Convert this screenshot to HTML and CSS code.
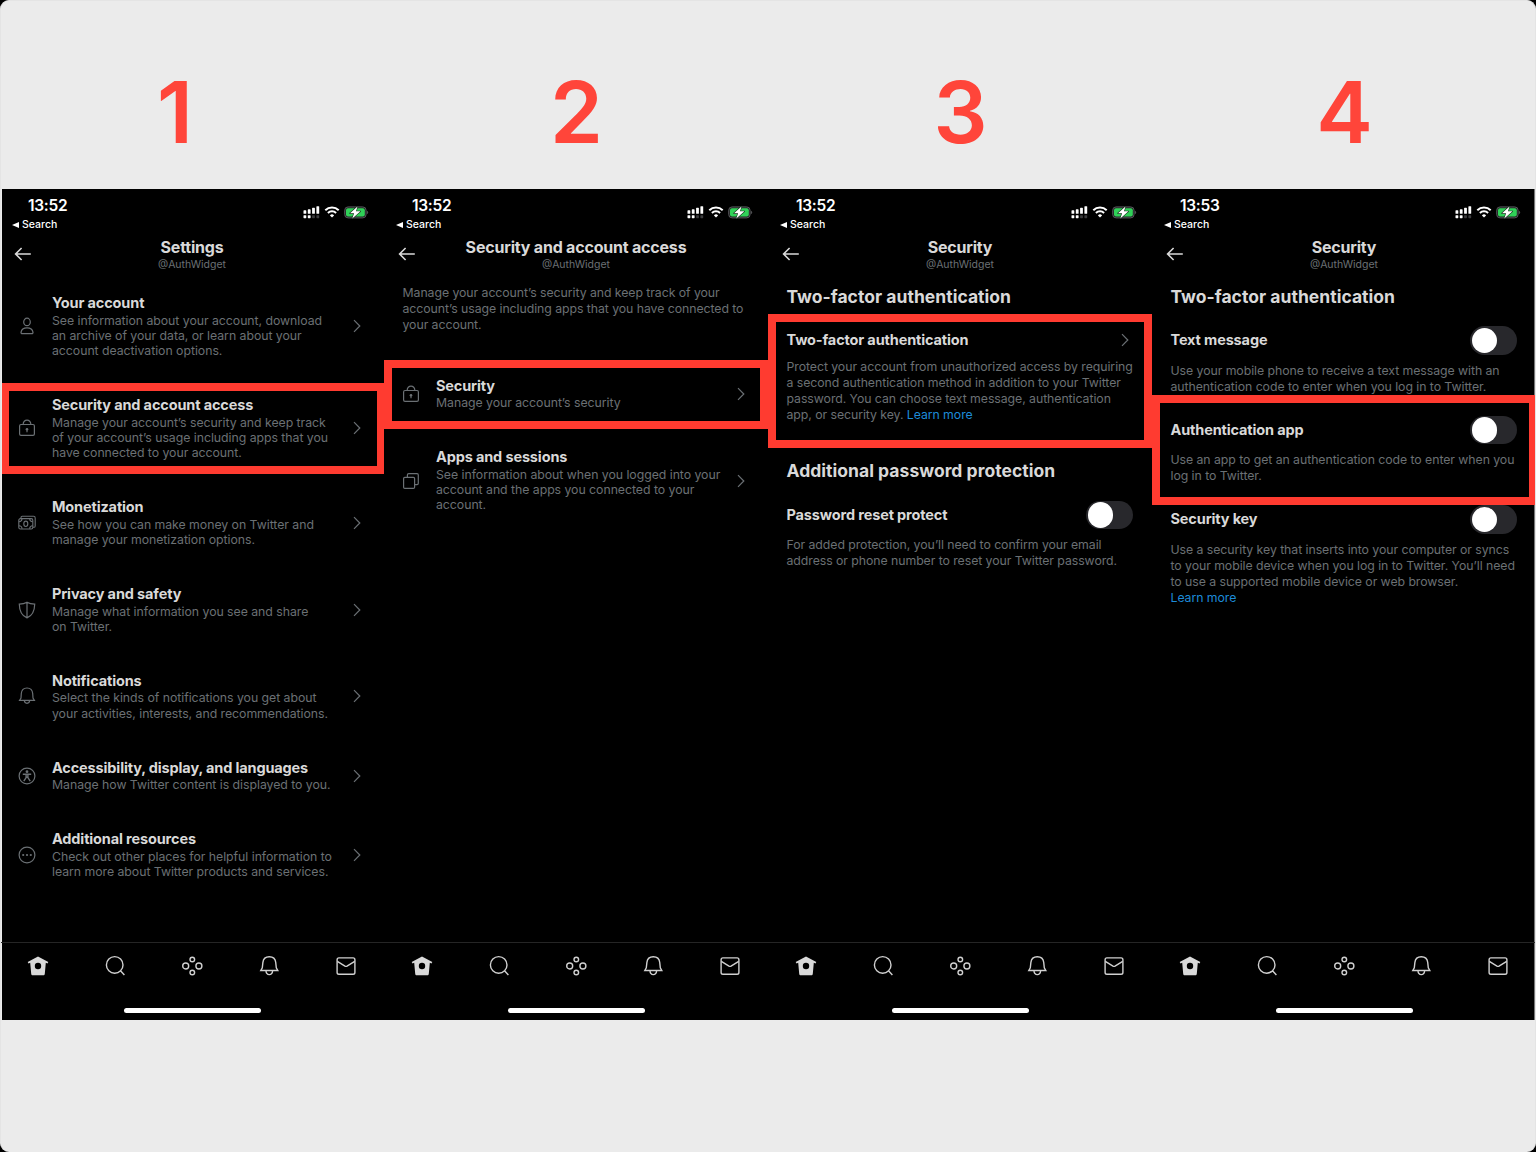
FILE: index.html
```html
<!DOCTYPE html>
<html lang="en">
<head>
<meta charset="utf-8">
<title>Two-factor authentication steps</title>
<link rel="stylesheet" href="styles.css">
</head>
<body>
<svg class="sprite" xmlns="http://www.w3.org/2000/svg">
  <symbol id="signal" viewBox="0 0 17 13"><g fill="#fff"><rect x="0.5" y="4.300" width="2.800" height="3.500" rx=".6"/><rect x="4.800" y="3.300" width="2.800" height="4.500" rx=".6"/><rect x="9.100" y="1.800" width="2.800" height="6" rx=".6"/><rect x="13.400" y="0.200" width="2.800" height="7.600" rx=".6"/><rect x="0.500" y="9.200" width="2.800" height="3" rx=".6"/><rect x="4.800" y="9.200" width="2.800" height="3" rx=".6"/></g><g fill="#3c3c3e"><rect x="9.100" y="9.200" width="2.800" height="3" rx=".6"/><rect x="13.400" y="9.200" width="2.800" height="3" rx=".6"/></g></symbol>
  <symbol id="wifi" viewBox="0 0 16 12"><g fill="none" stroke="#fff" stroke-width="2"><path d="M1.3 4.300a9.600 9.600 0 0 1 13.400 0"/><path d="M3.900 7a5.900 5.900 0 0 1 8.200 0"/></g><path d="M8 11.600 5.900 9.400a3 3 0 0 1 4.200 0z" fill="#fff"/></symbol>
  <symbol id="battery" viewBox="0 0 25 13"><rect x=".7" y=".9" width="21.400" height="11" rx="3.400" fill="#202022" stroke="#55565a"/><rect x="2" y="2.300" width="18.800" height="8.200" rx="2" fill="#30d158"/><path d="M23.200 4.700c1.300.5 1.300 2.900 0 3.400z" fill="#636366"/><path d="M13.500.4 6 7.300h4.100L8.300 12.400l8.200-7.100h-4.500z" fill="#fff" stroke="#16301d" stroke-width="1.200" stroke-linejoin="round" paint-order="stroke"/></symbol>
  <symbol id="back" viewBox="0 0 18 14"><path d="M7.600 1 1.600 7l6 6M1.600 7h15.200" fill="none" stroke="#d9d9d9" stroke-width="1.600"/></symbol>
  <symbol id="chevron" viewBox="0 0 8 14"><path d="m1 1.200 5.800 5.800L1 12.800" fill="none" stroke="currentColor" stroke-width="1.200"/></symbol>
  <symbol id="person" viewBox="0 0 18 18"><g fill="none" stroke="currentColor" stroke-width="1.200"><ellipse cx="9" cy="4.900" rx="3.300" ry="3.700"/><path d="M9 10.900c-3.500 0-5.600 1.600-6 4.400-.1.800.4 1.300 1.100 1.300h9.800c.7 0 1.200-.5 1.100-1.300-.4-2.800-2.500-4.400-6-4.400z"/></g></symbol>
  <symbol id="lock" viewBox="0 0 18 18"><g fill="none" stroke="currentColor" stroke-width="1.200"><rect x="1.600" y="5.500" width="14.800" height="10.900" rx="1.400"/><path d="M5.200 5.500V4.900a3.800 3.800 0 0 1 7.600 0v.6M9 10.500v2.800"/></g><circle cx="9" cy="10.200" r="1.300" fill="currentColor"/></symbol>
  <symbol id="money" viewBox="0 0 18 18"><g fill="none" stroke="currentColor" stroke-width="1.100"><rect x=".8" y="4.600" width="14" height="10.400" rx="1.600"/><path d="M3 4.400V3.600c0-.8.500-1.300 1.300-1.300h11.300c1 0 1.600.6 1.600 1.600v8c0 .8-.6 1.400-1.400 1.400h-.8M.9 7.700C2.800 7.700 4 6.500 4 4.800M14.700 7.700c-1.900 0-3-1.200-3-2.900M.9 11.800c1.900 0 3.100 1.200 3.100 3M14.700 11.800c-1.900 0-3 1.200-3 3"/><ellipse cx="7.800" cy="9.800" rx="2" ry="2.700"/></g></symbol>
  <symbol id="shield" viewBox="0 0 18 18"><path d="M9 1.200c2.200 1.300 4.700 1.900 7.700 2-.1 6-1.700 11.200-7.700 13.700C3 14.400 1.400 9.200 1.300 3.200 4.300 3.100 6.800 2.500 9 1.200zM9 1.200v15.700" fill="none" stroke="currentColor" stroke-width="1.200"/></symbol>
  <symbol id="bell" viewBox="0 0 18 18"><path d="M1.600 13.300h14.800l-1.400-2.200-.3-4.600C14.400 3.300 12.200 1 9 1S3.600 3.300 3.300 6.500L3 11.100zM6.300 13.300c.1 1.900 1.100 3 2.700 3s2.600-1.100 2.700-3" fill="none" stroke="currentColor" stroke-width="1.200"/></symbol>
  <symbol id="access" viewBox="0 0 18 18"><circle cx="9" cy="9" r="7.900" fill="none" stroke="currentColor" stroke-width="1.200"/><circle cx="9" cy="4.700" r="1.400" fill="currentColor"/><path d="M4.800 7.200h8.400M8.100 7.200v3.300l-2.300 3.700M9.900 7.200v3.300l2.300 3.700M8 10.300h2" fill="none" stroke="currentColor" stroke-width="1.400"/></symbol>
  <symbol id="more" viewBox="0 0 18 18"><circle cx="9" cy="9" r="7.900" fill="none" stroke="currentColor" stroke-width="1.200"/><g fill="currentColor"><circle cx="5.200" cy="9" r="1.100"/><circle cx="9" cy="9" r="1.100"/><circle cx="12.800" cy="9" r="1.100"/></g></symbol>
  <symbol id="windows" viewBox="0 0 18 18"><g fill="none" stroke="currentColor" stroke-width="1.200"><rect x="1.600" y="5.400" width="11" height="11" rx="1.200"/><path d="M5.400 5.200V3c0-.8.500-1.300 1.300-1.300H15c.8 0 1.300.5 1.300 1.300v8.300c0 .8-.5 1.300-1.300 1.300h-2.200"/></g></symbol>
  <symbol id="tab-home" viewBox="0 0 22 22"><path d="M11 1.400 21.300 7l-.8 1.600-1.700-.8-1 10.900c-.1 1-.7 1.500-1.600 1.500H5.800c-.9 0-1.500-.5-1.600-1.500L3.200 7.800l-1.700.8L.7 7z" fill="#d9d9d9"/><circle cx="11" cy="11" r="3.200" fill="#000"/></symbol>
  <symbol id="tab-search" viewBox="0 0 22 22"><path d="M19 9.900a8.300 8.300 0 1 1-16.600 0 8.300 8.300 0 0 1 16.600 0zM16.500 15.700l3.900 4.300" fill="none" stroke="#d0d0d0" stroke-width="1.400"/></symbol>
  <symbol id="tab-spaces" viewBox="0 0 22 22"><g fill="none" stroke="#d0d0d0" stroke-width="1.400"><circle cx="11.300" cy="4.500" r="2.300"/><circle cx="11.300" cy="17.500" r="2.300"/><circle cx="4.700" cy="11" r="3"/><circle cx="17.900" cy="11" r="3"/></g></symbol>
  <symbol id="tab-bell" viewBox="0 0 22 22"><path d="M2.800 15.500h17l-1.500-2.600-.6-5.600C17.300 3.900 14.800 1.800 11.300 1.800S5.300 3.900 4.900 7.300l-.6 5.600zM7.900 15.500c.2 2.500 1.400 4.100 3.400 4.100s3.200-1.600 3.400-4.100" fill="none" stroke="#d0d0d0" stroke-width="1.400"/></symbol>
  <symbol id="tab-mail" viewBox="0 0 22 22"><rect x="2.100" y="2.900" width="17.800" height="16.400" rx="1.800" fill="none" stroke="#d0d0d0" stroke-width="1.400"/><path d="m2.300 6.300 7.700 4.800c.7.400 1.300.4 2 0l7.700-4.800" fill="none" stroke="#d0d0d0" stroke-width="1.400"/></symbol>
</svg>
<main class="board">
  <div class="steps">
    <span class="step step-one">1</span><span class="step">2</span><span class="step">3</span><span class="step">4</span>
  </div>
  <div class="phones">
    <section class="phone">
      <div class="status"><div class="clock"><div class="time">13:52</div><div class="return"><i class="caret"></i>Search</div></div><div class="indicators"><svg class="signal"><use href="#signal"/></svg><svg class="wifi"><use href="#wifi"/></svg><svg class="battery"><use href="#battery"/></svg></div></div>
      <header class="nav"><svg class="back"><use href="#back"/></svg><div class="heading"><h1>Settings</h1><p class="handle">@AuthWidget</p></div></header>
      <div class="content">
        <div class="item"><svg class="icon"><use href="#person"/></svg><div class="text"><h3>Your account</h3><p>See information about your account, download<br>an archive of your data, or learn about your<br>account deactivation options.</p></div><svg class="chevron"><use href="#chevron"/></svg></div>
        <div class="item"><svg class="icon"><use href="#lock"/></svg><div class="text"><h3>Security and account access</h3><p>Manage your account’s security and keep track<br>of your account’s usage including apps that you<br>have connected to your account.</p></div><svg class="chevron"><use href="#chevron"/></svg></div>
        <div class="item"><svg class="icon"><use href="#money"/></svg><div class="text"><h3>Monetization</h3><p>See how you can make money on Twitter and<br>manage your monetization options.</p></div><svg class="chevron"><use href="#chevron"/></svg></div>
        <div class="item"><svg class="icon"><use href="#shield"/></svg><div class="text"><h3>Privacy and safety</h3><p>Manage what information you see and share<br>on Twitter.</p></div><svg class="chevron"><use href="#chevron"/></svg></div>
        <div class="item"><svg class="icon"><use href="#bell"/></svg><div class="text"><h3>Notifications</h3><p>Select the kinds of notifications you get about<br>your activities, interests, and recommendations.</p></div><svg class="chevron"><use href="#chevron"/></svg></div>
        <div class="item"><svg class="icon"><use href="#access"/></svg><div class="text"><h3>Accessibility, display, and languages</h3><p>Manage how Twitter content is displayed to you.</p></div><svg class="chevron"><use href="#chevron"/></svg></div>
        <div class="item"><svg class="icon"><use href="#more"/></svg><div class="text"><h3>Additional resources</h3><p>Check out other places for helpful information to<br>learn more about Twitter products and services.</p></div><svg class="chevron"><use href="#chevron"/></svg></div>
      </div>
      <nav class="tabs"><svg><use href="#tab-home"/></svg><svg><use href="#tab-search"/></svg><svg><use href="#tab-spaces"/></svg><svg><use href="#tab-bell"/></svg><svg><use href="#tab-mail"/></svg></nav>
      <div class="home-bar"></div>
      <div class="highlight mark-account"></div>
    </section>
    <section class="phone">
      <div class="status"><div class="clock"><div class="time">13:52</div><div class="return"><i class="caret"></i>Search</div></div><div class="indicators"><svg class="signal"><use href="#signal"/></svg><svg class="wifi"><use href="#wifi"/></svg><svg class="battery"><use href="#battery"/></svg></div></div>
      <header class="nav"><svg class="back"><use href="#back"/></svg><div class="heading"><h1>Security and account access</h1><p class="handle">@AuthWidget</p></div></header>
      <div class="content">
        <p class="note intro">Manage your account’s security and keep track of your<br>account’s usage including apps that you have connected to<br>your account.</p>
        <div class="item"><svg class="icon"><use href="#lock"/></svg><div class="text"><h3>Security</h3><p>Manage your account’s security</p></div><svg class="chevron"><use href="#chevron"/></svg></div>
        <div class="item"><svg class="icon"><use href="#windows"/></svg><div class="text"><h3>Apps and sessions</h3><p>See information about when you logged into your<br>account and the apps you connected to your<br>account.</p></div><svg class="chevron"><use href="#chevron"/></svg></div>
      </div>
      <nav class="tabs"><svg><use href="#tab-home"/></svg><svg><use href="#tab-search"/></svg><svg><use href="#tab-spaces"/></svg><svg><use href="#tab-bell"/></svg><svg><use href="#tab-mail"/></svg></nav>
      <div class="home-bar"></div>
      <div class="highlight mark-security"></div>
    </section>
    <section class="phone">
      <div class="status"><div class="clock"><div class="time">13:52</div><div class="return"><i class="caret"></i>Search</div></div><div class="indicators"><svg class="signal"><use href="#signal"/></svg><svg class="wifi"><use href="#wifi"/></svg><svg class="battery"><use href="#battery"/></svg></div></div>
      <header class="nav"><svg class="back"><use href="#back"/></svg><div class="heading"><h1>Security</h1><p class="handle">@AuthWidget</p></div></header>
      <div class="content form">
        <h2>Two-factor authentication</h2>
        <div class="option link-option"><h3>Two-factor authentication</h3><svg class="chevron"><use href="#chevron"/></svg></div>
        <p class="note">Protect your account from unauthorized access by requiring<br>a second authentication method in addition to your Twitter<br>password. You can choose text message, authentication<br>app, or security key. <a>Learn more</a></p>
        <h2 class="second">Additional password protection</h2>
        <div class="option"><h3>Password reset protect</h3><span class="toggle"></span></div>
        <p class="note">For added protection, you’ll need to confirm your email<br>address or phone number to reset your Twitter password.</p>
      </div>
      <nav class="tabs"><svg><use href="#tab-home"/></svg><svg><use href="#tab-search"/></svg><svg><use href="#tab-spaces"/></svg><svg><use href="#tab-bell"/></svg><svg><use href="#tab-mail"/></svg></nav>
      <div class="home-bar"></div>
      <div class="highlight mark-factor"></div>
    </section>
    <section class="phone">
      <div class="status"><div class="clock"><div class="time">13:53</div><div class="return"><i class="caret"></i>Search</div></div><div class="indicators"><svg class="signal"><use href="#signal"/></svg><svg class="wifi"><use href="#wifi"/></svg><svg class="battery"><use href="#battery"/></svg></div></div>
      <header class="nav"><svg class="back"><use href="#back"/></svg><div class="heading"><h1>Security</h1><p class="handle">@AuthWidget</p></div></header>
      <div class="content form">
        <h2>Two-factor authentication</h2>
        <div class="option"><h3>Text message</h3><span class="toggle"></span></div>
        <p class="note">Use your mobile phone to receive a text message with an<br>authentication code to enter when you log in to Twitter.</p>
        <div class="option"><h3>Authentication app</h3><span class="toggle"></span></div>
        <p class="note">Use an app to get an authentication code to enter when you<br>log in to Twitter.</p>
        <div class="option"><h3>Security key</h3><span class="toggle"></span></div>
        <p class="note">Use a security key that inserts into your computer or syncs<br>to your mobile device when you log in to Twitter. You’ll need<br>to use a supported mobile device or web browser.<br><a>Learn more</a></p>
      </div>
      <nav class="tabs"><svg><use href="#tab-home"/></svg><svg><use href="#tab-search"/></svg><svg><use href="#tab-spaces"/></svg><svg><use href="#tab-bell"/></svg><svg><use href="#tab-mail"/></svg></nav>
      <div class="home-bar"></div>
      <div class="highlight mark-app"></div>
    </section>
  </div>
</main>
</body>
</html>
```
FILE: styles.css
```css
* { box-sizing: border-box; }
body { margin: 0; background: #000; font-family: Inter, "Liberation Sans", sans-serif; color: #d9d9d9; }
h1, h2, h3, p { margin: 0; white-space: nowrap; }
svg { display: block; flex: none; }
.sprite { display: none; }

.board { width: 1536px; height: 1152px; border-radius: 9px; background: #ebebeb; border: solid #e4e4e4; border-width: 1px 1px 0; overflow: hidden; }
.steps { display: grid; grid-template-columns: repeat(4, 384px); height: 188px; margin: 0 -1px; padding-top: 61px; }
.step { text-align: center; font-size: 85px; line-height: 102px; font-weight: 600; letter-spacing: -1px; color: #ff453a; }
.step-one { padding-right: 35px; }

.phones { display: grid; grid-template-columns: repeat(4, 384px); height: 831px; margin: 0 -1px; background: linear-gradient(#000, #000) center / 1532.5px 100% no-repeat; }
.phone { position: relative; display: flex; flex-direction: column; min-width: 0; }

.status { display: flex; justify-content: space-between; height: 44px; padding: 8px 15px 0 12px; color: #fff; }
.time { padding-left: 16px; font-size: 15.5px; line-height: 18px; font-weight: 600; letter-spacing: -.3px; }
.return { display: flex; align-items: center; gap: 3px; font-size: 10.5px; line-height: 19px; font-weight: 500; letter-spacing: 0; }
.caret { border: solid transparent; border-width: 3.5px 7px 3.5px 0; border-right-color: #fff; }
.indicators { display: flex; align-items: center; height: 13px; margin-top: 8.5px; }
.signal { width: 17px; height: 13px; }
.wifi { width: 16px; height: 12px; margin-left: 4px; }
.battery { width: 25px; height: 13px; margin-left: 4px; }

.nav { display: grid; grid-template-columns: 60px 1fr 60px; height: 42px; }
.back { width: 18px; height: 14px; margin: 14px 0 0 13.5px; }
.heading { padding-top: 4.5px; text-align: center; }
.heading h1 { font-size: 16px; line-height: 18px; font-weight: 700; letter-spacing: -.2px; }
.handle { font-size: 10.5px; line-height: 17px; color: #6b7074; }

.content { flex: 1; }
.item { display: flex; align-items: center; padding: 18.9px 22.8px 18.9px 18.3px; color: #6b7074; }
.item:first-child { padding-top: 19.2px; }
.icon { width: 18px; height: 18px; margin-right: 15.7px; }
.text { flex: 1; min-width: 0; }
.text p { font-size: 12.3px; line-height: 15.3px; letter-spacing: -.04px; }
h3 { font-size: 14.5px; line-height: 18.4px; font-weight: 700; letter-spacing: -.14px; color: #d9d9d9; }
.chevron { width: 8px; height: 14px; color: #6b7074; }

.note { font-size: 12.3px; line-height: 16px; letter-spacing: -.06px; color: #6b7074; }
.note a { color: #1d8bd8; }
.intro { padding: 10px 18.5px 25px; }

.form { padding: 11px 19.3px 0 18.5px; }
h2 { font-size: 17.5px; line-height: 22px; font-weight: 700; letter-spacing: .03px; }
.second { margin-top: 36.5px; }
.option { display: flex; align-items: center; justify-content: space-between; height: 28.5px; margin: 18px 0 8px; }
.link-option { height: 20px; margin: 21.5px 3.5px 9.5px 0; }
.note + .option { margin-top: 21px; }
.second + .option { margin-top: 19px; }
.option h3 { line-height: 20px; }
.toggle { width: 46.5px; height: 28.5px; padding: 1.5px; border-radius: 15px; background: #28282c; }
.toggle::before { content: ""; display: block; width: 25.5px; height: 25.5px; border-radius: 50%; background: #fff; }

.tabs { display: flex; align-items: center; justify-content: space-between; height: 48px; padding: 0 27px 2px; border-top: 1px solid #252525; }
.tabs svg { width: 22px; height: 22px; }
.home-bar { width: 137px; height: 5px; margin: 17.5px 0 7.5px 123.5px; border-radius: 3px; background: #fff; }

.highlight { position: absolute; left: 0; right: 0; border: 8px solid #ff3b30; }
.mark-account { left: 1.5px; top: 194px; height: 91px; border-width: 8px 7px; }
.mark-security { top: 171px; height: 69px; }
.mark-factor { top: 125px; height: 134px; }
.mark-app { right: 1.5px; top: 206px; height: 110px; border-right-width: 6px; }
```
